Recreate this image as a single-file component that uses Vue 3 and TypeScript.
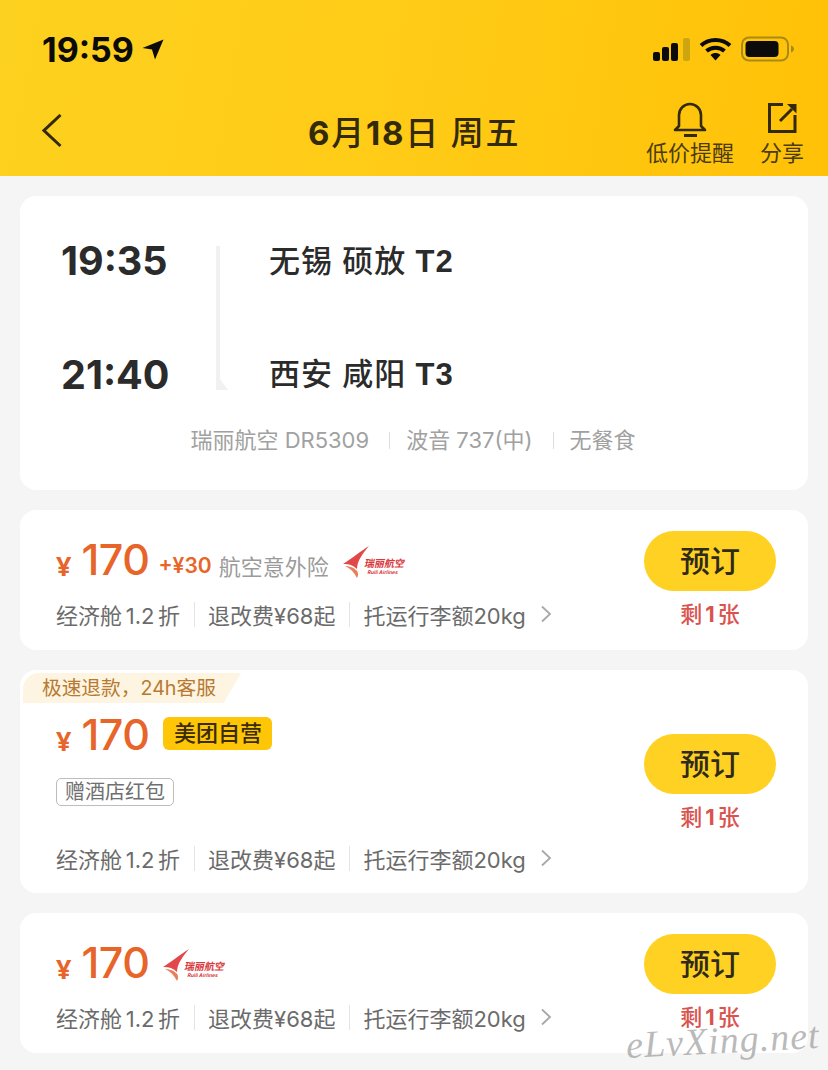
<script setup lang="ts">
interface Ticket {
  id: number;
  extra: boolean;
  logoInline: boolean;
  promo: boolean;
}

const tickets: Ticket[] = [
  { id: 1, extra: true, logoInline: true, promo: false },
  { id: 2, extra: false, logoInline: false, promo: true },
  { id: 3, extra: false, logoInline: true, promo: false }
];
</script>

<template>
  <div class="page">
    <header class="header">
      <div class="status">
        <div class="status-left">
          <span class="clock">19:59</span>
          <svg class="loc" width="22" height="21" viewBox="0 0 22 21">
            <path d="M21.500 0.500 0.500 9l9.500 1.500L13 20.500z" fill="#0b0b0b" />
          </svg>
        </div>
        <div class="status-right">
          <svg width="37" height="23" viewBox="0 0 37 23">
            <rect x="0" y="14" width="7" height="9" rx="2" fill="#0b0b0b" />
            <rect x="9" y="9" width="7" height="14" rx="2" fill="#0b0b0b" />
            <rect x="18" y="5" width="7" height="18" rx="2" fill="#0b0b0b" />
            <rect x="30" y="0" width="7" height="23" rx="2" fill="#cda60f" />
          </svg>
          <svg width="33" height="24" viewBox="0 0 33 24">
            <path d="M2 8.500C10 1 23 1 31 8.500" fill="none" stroke="#0b0b0b" stroke-width="4" />
            <path d="M7.500 14c5-4.400 13-4.400 18 0" fill="none" stroke="#0b0b0b" stroke-width="4" />
            <path d="M11.500 18c3-2.600 7-2.600 10 0l-5 5.500z" fill="#0b0b0b" />
          </svg>
          <svg width="54" height="26" viewBox="0 0 54 26">
            <rect x="1" y="1.500" width="46" height="23" rx="7" fill="none" stroke="#a98a17" stroke-width="2" />
            <rect x="4.500" y="5" width="33" height="16" rx="4" fill="#0b0b0b" />
            <path d="M50 9.500c2 .6 3 2 3 3.500s-1 2.900-3 3.500z" fill="#a98a17" />
          </svg>
        </div>
      </div>
      <nav class="nav">
        <svg class="back" width="20" height="34" viewBox="0 0 20 34">
          <path d="M18.500 1 2 16.500 18.500 32" fill="none" stroke="#33290b" stroke-width="3" />
        </svg>
        <h1 class="title"><b>6</b>月<b>18</b>日 周五</h1>
        <div class="actions">
          <div class="action alert">
            <svg width="36" height="36" viewBox="0 0 36 36">
              <path d="M7 25V14a11 11 0 0 1 22 0v11l4 4H3z" fill="none" stroke="#33290b" stroke-width="2.600" stroke-linejoin="round" />
              <rect x="12" y="33" width="13" height="3" fill="#33290b" />
            </svg>
            <span>低价提醒</span>
          </div>
          <div class="action share">
            <svg width="36" height="36" viewBox="0 0 36 36">
              <path d="M19 3.500H5.500V30.500H31V14" fill="none" stroke="#33290b" stroke-width="3" />
              <path d="M16 20 28 8" fill="none" stroke="#33290b" stroke-width="3" />
              <path d="M23 3h9.500v9.500z" fill="#33290b" />
            </svg>
            <span>分享</span>
          </div>
        </div>
      </nav>
    </header>

    <main class="list">
      <section class="card flight">
        <div class="route">
          <div class="times">
            <div>19:35</div>
            <div>21:40</div>
          </div>
          <div class="line"></div>
          <div class="places">
            <div>无锡 硕放 <b>T2</b></div>
            <div>西安 咸阳 <b>T3</b></div>
          </div>
        </div>
        <div class="flight-meta">
          <span>瑞丽航空 DR5309</span>
          <i></i>
          <span>波音 737(中)</span>
          <i></i>
          <span>无餐食</span>
        </div>
      </section>

      <section
        v-for="t in tickets"
        :key="t.id"
        class="card ticket"
        :class="{ 'has-promo': t.promo }"
      >
        <div v-if="t.promo" class="promo">极速退款，24h客服</div>
        <div class="ticket-main">
          <div class="price-row">
            <span class="yen">¥</span>
            <span class="price">170</span>
            <template v-if="t.extra">
              <span class="plus">+¥30</span>
              <span class="insure">航空意外险</span>
            </template>
            <span v-if="t.promo" class="self">美团自营</span>
            <div v-if="t.logoInline" class="logo">
              <svg width="30" height="36" viewBox="0 0 30 36">
                <path d="M26 1C18 6 8 14 0 19c6 0 10 1 14 5C14 16 20 8 26 1z" fill="#e2474a" />
                <path d="M2 21c5 2 9 6 12 12 2-3 1-7-1-8-3-3-7-4-11-4z" fill="#e8805a" />
              </svg>
              <div class="logo-text">
                <b>瑞丽航空</b>
                <small>Ruili Airlines</small>
              </div>
            </div>
          </div>
          <div v-if="t.promo" class="gift">赠酒店红包</div>
          <div class="rules">
            <span>经济舱 1.2 折</span>
            <i></i>
            <span>退改费¥68起</span>
            <i></i>
            <span>托运行李额20kg</span>
            <svg class="more" width="12" height="18" viewBox="0 0 12 18">
              <path d="M2 1.500 10 9l-8 7.500" fill="none" stroke="#a8a8a8" stroke-width="1.800" />
            </svg>
          </div>
        </div>
        <div class="book">
          <button class="book-btn">预订</button>
          <div class="left">剩<b>1</b>张</div>
        </div>
      </section>
    </main>

    <div class="watermark">eLvXing.net</div>
  </div>
</template>

<style>
html,
body {
  margin: 0;
  background: #f5f5f5;
}
</style>

<style scoped>
.page {
  position: relative;
  width: 828px;
  height: 1070px;
  overflow: hidden;
  background: #f5f5f5;
  font-family: Inter, "Noto Sans CJK SC", sans-serif;
}

.header {
  height: 176px;
  box-sizing: border-box;
  padding: 30px 24px 0 42px;
  background: linear-gradient(100deg, #fdd11f 0%, #ffcb16 50%, #ffc107 100%);
}

.status {
  display: flex;
  justify-content: space-between;
  align-items: center;
  height: 38px;
}

.status-left {
  display: flex;
  align-items: center;
  gap: 8px;
}

.clock {
  font-size: 34px;
  font-weight: 700;
  color: #0b0b0b;
}

.status-right {
  display: flex;
  align-items: center;
  gap: 9px;
  margin-right: 9px;
}

.nav {
  position: relative;
  display: flex;
  align-items: flex-start;
  justify-content: space-between;
  margin-top: 33px;
}

.back {
  margin-top: 13px;
}

.title {
  position: absolute;
  left: 266px;
  top: 9px;
  margin: 0;
  font-size: 33px;
  line-height: 46px;
  font-weight: 500;
  letter-spacing: 1.800px;
  color: #33290b;
}

.title b {
  font-weight: 700;
}

.actions {
  display: flex;
  gap: 26px;
}

.action {
  display: flex;
  flex-direction: column;
  align-items: center;
  font-size: 22px;
  line-height: 30px;
  color: #4a3c10;
}

.action span {
  margin-top: 1px;
}

.list {
  display: flex;
  flex-direction: column;
  gap: 20px;
  padding: 20px 20px 0;
}

.card {
  background: #fff;
  border-radius: 16px;
}

.flight {
  height: 294px;
  box-sizing: border-box;
  padding: 40px 0 0 41px;
}

.route {
  display: flex;
  height: 164px;
}

.times {
  width: 155px;
  display: flex;
  flex-direction: column;
  justify-content: space-between;
  font-size: 39.500px;
  line-height: 50px;
  font-weight: 700;
  color: #2b2b2b;
}

.line {
  position: relative;
  width: 4px;
  height: 144px;
  margin-top: 10px;
  background: #f1f1f1;
}

.line::after {
  content: "";
  position: absolute;
  left: 4px;
  bottom: 0;
  border-top: 11px solid #f1f1f1;
  border-right: 8px solid transparent;
  transform: rotate(180deg) scaleX(-1);
}

.places {
  display: flex;
  flex-direction: column;
  justify-content: space-between;
  margin-left: 49px;
  font-size: 31px;
  line-height: 50px;
  font-weight: 500;
  letter-spacing: 1px;
  color: #2b2b2b;
}

.places b {
  font-family: "Liberation Sans", sans-serif;
  font-weight: 700;
}

.flight-meta {
  display: flex;
  align-items: center;
  justify-content: center;
  margin: 25px 0 0 -43px;
  font-size: 22px;
  line-height: 30px;
  color: #a1a1a1;
}

.flight-meta i,
.rules i {
  display: block;
  width: 1px;
  height: 17px;
  background: #dddddd;
}

.flight-meta i {
  margin: 0 16px 0 20px;
}

.ticket {
  position: relative;
  display: flex;
  justify-content: space-between;
  height: 140px;
  box-sizing: border-box;
  padding: 20px 32px 0 36px;
}

.ticket.has-promo {
  height: 223px;
  padding-top: 35px;
}

.promo {
  position: absolute;
  left: 3px;
  top: 3px;
  width: 218px;
  height: 30px;
  box-sizing: border-box;
  padding-left: 19px;
  border-top-left-radius: 16px;
  font-size: 19.700px;
  line-height: 30px;
  color: #b77a30;
  background: #fdf4e2;
  clip-path: polygon(0 0, 100% 0, 92% 100%, 0 100%);
}

.ticket-main {
  display: flex;
  flex-direction: column;
}

.price-row {
  display: flex;
  align-items: center;
  height: 60px;
  color: #e8652a;
}

.yen {
  font-family: "Noto Sans", sans-serif;
  font-size: 27px;
  font-weight: 700;
  margin: 10px 10px 0 0;
}

.price {
  margin-bottom: 2px;
  font-size: 43px;
  font-weight: 500;
  line-height: 60px;
  letter-spacing: -0.500px;
}

.plus {
  margin: 10px 0 0 9px;
  font-size: 21px;
  font-weight: 600;
}

.insure {
  margin: 10px 0 0 7px;
  font-size: 22px;
  color: #9b9b9b;
}

.self {
  margin: 0 0 3px 14px;
  width: 109px;
  height: 33px;
  border-radius: 6px;
  text-align: center;
  font-size: 22px;
  line-height: 33px;
  font-weight: 500;
  color: #3a2c05;
  background: #ffc507;
}

.logo {
  display: flex;
  align-items: flex-end;
  margin: 6px 0 0 14px;
  height: 36px;
}

.logo-text {
  display: flex;
  flex-direction: column;
  align-items: center;
  margin: 0 0 6px -9px;
  transform: skewX(-12deg);
  color: #d9383c;
}

.logo-text b {
  font-size: 10px;
  line-height: 11px;
  white-space: nowrap;
}

.logo-text small {
  font-size: 5px;
  line-height: 6px;
  font-weight: 700;
  white-space: nowrap;
}

.gift {
  align-self: flex-start;
  margin-top: 13px;
  height: 28px;
  box-sizing: border-box;
  padding: 0 8px;
  border: 1px solid #bdbdbd;
  border-radius: 5px;
  font-size: 20px;
  line-height: 26px;
  color: #6f6f6f;
}

.rules {
  display: flex;
  align-items: center;
  margin-top: 8px;
  height: 32px;
  font-size: 22px;
  word-spacing: -2.500px;
  color: #6b6b6b;
}

.has-promo .rules {
  margin-top: 36px;
}

.rules i {
  height: 25px;
  margin: 0 13px 0 14px;
  background: #e4e4e4;
}

.more {
  margin-left: 14px;
}

.book {
  display: flex;
  flex-direction: column;
  align-items: center;
  margin-top: 1px;
}

.has-promo .book {
  margin-top: 29px;
}

.book-btn {
  width: 132px;
  height: 60px;
  padding: 0 0 4px;
  border: none;
  border-radius: 30px;
  font-family: inherit;
  font-size: 30px;
  font-weight: 500;
  color: #2f2a1a;
  background: #ffd122;
}

.left {
  margin-top: 8px;
  font-size: 22px;
  line-height: 30px;
  font-weight: 500;
  color: #d9534f;
}

.left b {
  margin: 0 3px;
}

.watermark {
  position: absolute;
  right: 8px;
  bottom: 8px;
  font-family: "Liberation Serif", serif;
  font-style: italic;
  font-size: 38px;
  letter-spacing: 1px;
  color: rgba(140, 140, 140, 0.6);
  transform: rotate(-3deg);
}
</style>
